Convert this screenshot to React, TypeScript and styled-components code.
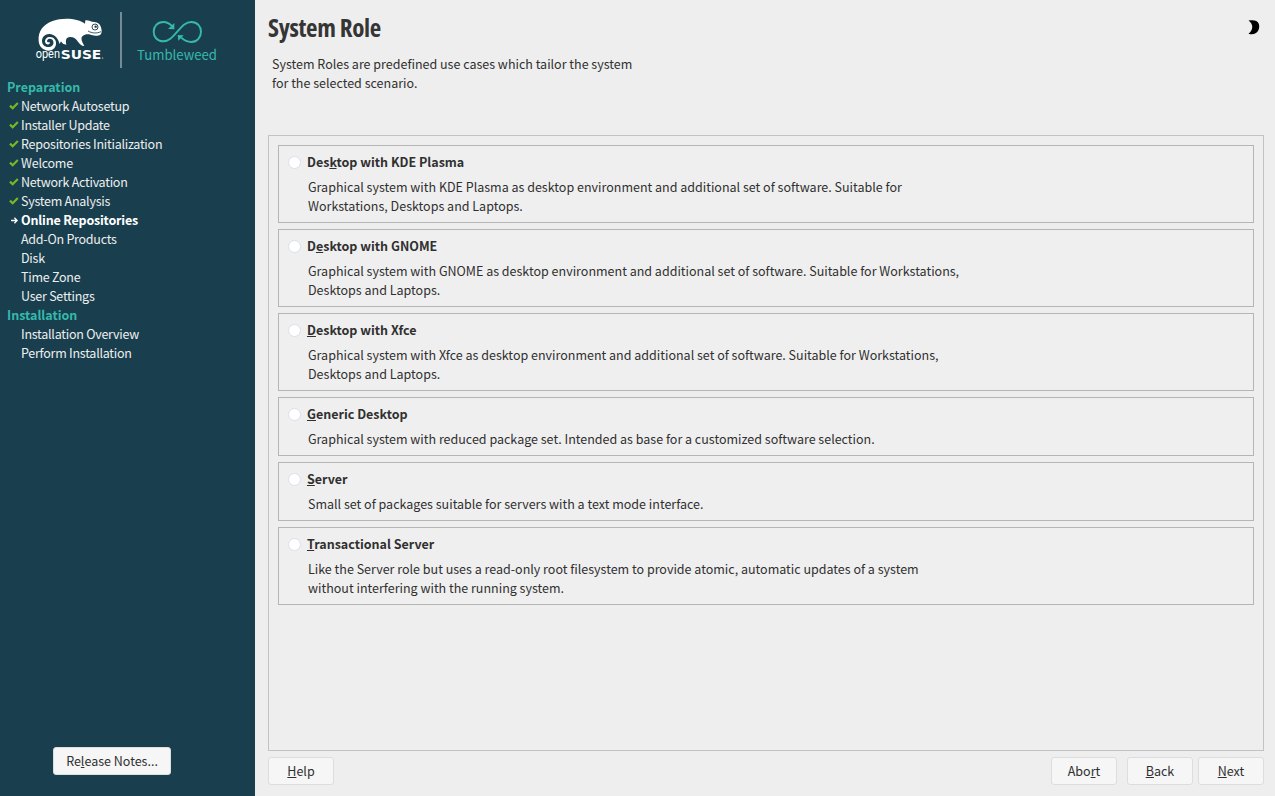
import React from "react";
import styled, { createGlobalStyle } from "styled-components";

const Global = createGlobalStyle`
  * { box-sizing: border-box; }
  body { margin: 0; background: #eeeeee; }
  body, button {
    font-family: "Noto Sans CJK SC", "Source Sans Pro", sans-serif;
    font-size: 12.51px;
    line-height: 19px;
    color: #303030;
  }
`;

const Screen = styled.div`
  display: flex;
  width: 1275px;
  height: 796px;
  overflow: hidden;
`;

const Sidebar = styled.aside`
  display: flex;
  flex-direction: column;
  width: 255px;
  background: #193f4f;
`;

const Logo = styled.svg`
  display: block;
  width: 220px;
  height: 78px;
  margin-left: 20px;
`;

const Steps = styled.ul`
  list-style: none;
  margin: -1px 0 0;
  padding: 0;
  flex: 1;
`;

const Section = styled.li`
  height: 19px;
  padding-left: 7px;
  font-weight: 700;
  color: #35b9ab;
`;

const StepRow = styled.li<{ $current?: boolean }>`
  display: flex;
  align-items: center;
  height: 19px;
  padding-left: 8px;
  color: ${(p) => (p.$current ? "#ffffff" : "#eeeeee")};
  font-weight: ${(p) => (p.$current ? 700 : 400)};
  letter-spacing: ${(p) => (p.$current ? "-0.18px" : "-0.25px")};
`;

const StepIcon = styled.svg`
  width: 13px;
  height: 19px;
  flex: none;
`;

const StepLabel = styled.span`
  white-space: nowrap;
`;

const Main = styled.main`
  flex: 1;
  display: flex;
  flex-direction: column;
  padding: 0 11px 11px 13px;
`;

const Header = styled.header`
  display: flex;
  justify-content: space-between;
  height: 54px;
  padding-top: 9px;
`;

const Title = styled.h1`
  margin: 0;
  font-family: "Open Sans", sans-serif;
  font-stretch: 75%;
  font-weight: 700;
  font-size: 25px;
  line-height: 36px;
  letter-spacing: -0.32px;
  color: #353535;
  white-space: nowrap;
`;

const Moon = styled.svg`
  width: 24px;
  height: 24px;
  margin: 6px 1px 0 0;
`;

const Intro = styled.p`
  margin: 0;
  height: 81px;
  padding-left: 4px;
  white-space: pre-line;
`;

const Panel = styled.section`
  flex: 1;
  display: flex;
  flex-direction: column;
  gap: 6px;
  padding: 9px;
  border: 1px solid #c3c3c3;
`;

const Card = styled.label`
  display: grid;
  grid-template-columns: 19px 1fr;
  row-gap: 6px;
  padding: 6px 9px 7px;
  border: 1px solid #b5b5b5;
  background: #efefef;
`;

const Radio = styled.input`
  appearance: none;
  width: 13px;
  height: 13px;
  margin: 4px 0 0;
  border: 1px solid #dcdfee;
  border-radius: 50%;
  background: #ffffff;
`;

const RoleName = styled.span`
  font-weight: 700;
`;

const Description = styled.span`
  grid-column: 2;
  padding-left: 1px;
  white-space: pre-line;
`;

const Mnemonic = styled.u`
  text-decoration-thickness: 1px;
  text-underline-offset: 1px;
  text-decoration-skip-ink: none;
`;

const Footer = styled.footer`
  display: flex;
  padding-top: 6px;
`;

const Button = styled.button<{ $width?: number }>`
  width: ${(p) => p.$width ?? 66}px;
  height: 28px;
  padding: 0 0 2px;
  border: 1px solid #dddddd;
  border-radius: 3px;
  background: #f6f6f6;
`;

const ReleaseNotes = styled(Button)`
  margin: 0 0 21px 53px;
`;

const Actions = styled.div`
  display: flex;
  margin-left: auto;
  gap: 5px;
`;

const AbortSlot = styled.div`
  padding-right: 5px;
`;

function Hotkey({ text, at }: { text: string; at: number }) {
  return (
    <>
      {text.slice(0, at)}
      <Mnemonic>{text[at]}</Mnemonic>
      {text.slice(at + 1)}
    </>
  );
}

const done = ["Network Autosetup", "Installer Update", "Repositories Initialization", "Welcome", "Network Activation", "System Analysis"];
const pending = ["Add-On Products", "Disk", "Time Zone", "User Settings"];
const install = ["Installation Overview", "Perform Installation"];

const roles = [
  { name: "Desktop with KDE Plasma", at: 3, text: "Graphical system with KDE Plasma as desktop environment and additional set of software. Suitable for\nWorkstations, Desktops and Laptops." },
  { name: "Desktop with GNOME", at: 1, text: "Graphical system with GNOME as desktop environment and additional set of software. Suitable for Workstations,\nDesktops and Laptops." },
  { name: "Desktop with Xfce", at: 0, text: "Graphical system with Xfce as desktop environment and additional set of software. Suitable for Workstations,\nDesktops and Laptops." },
  { name: "Generic Desktop", at: 0, text: "Graphical system with reduced package set. Intended as base for a customized software selection." },
  { name: "Server", at: 0, text: "Small set of packages suitable for servers with a text mode interface." },
  { name: "Transactional Server", at: 0, text: "Like the Server role but uses a read-only root filesystem to provide atomic, automatic updates of a system\nwithout interfering with the running system." },
];

function Step({ label, state }: { label: string; state: "done" | "current" | "pending" }) {
  return (
    <StepRow $current={state === "current"}>
      <StepIcon viewBox="0 0 13 19">
        {state === "done" && <path d="M2 9.6 L4.7 12.3 L9.8 7.1" fill="none" stroke="#73ba25" strokeWidth="2.2" />}
        {state === "current" && <path d="M3 10.5 H9 M6.4 7.8 L9.1 10.5 L6.4 13.2" fill="none" stroke="#fff" strokeWidth="1.3" />}
      </StepIcon>
      <StepLabel>{label}</StepLabel>
    </StepRow>
  );
}

function Brand() {
  return (
    <Logo viewBox="0 0 660 234">
      <path
        fill="#fff"
        d="M56 124 C53 92 72 72 98 63 C120 55 150 55 170 60 C182 63 190 67 195 71 L196 61 C204 60 210 63 216 65 C226 65 236 68 240 75 C245 84 247 96 243 102 C238 110 226 107 212 104 C202 102 194 103 188 108 C182 113 184 122 193 138 C184 137 180 133 174 125 C168 116 162 111 150 111 C138 111 136 122 139 134 C131 134 126 130 123 124 L119 132 C115 118 107 104 90 102 C76 101 66 110 66 124 C67 136 77 143 88 141 C98 139 103 131 99 122 C96 115 86 114 82 120 C79 125 84 129 89 126 C92 132 84 136 78 131 C72 125 76 112 87 111 C100 109 110 120 108 133 C106 146 96 152 86 152 C69 152 57 139 56 124 Z"
      />
      <circle cx="225" cy="81" r="9" fill="#fff" stroke="#193f4f" strokeWidth="2.8" />
      <circle cx="227" cy="80" r="3.6" fill="#193f4f" />
      <path d="M204 93 C216 100 230 101 243 95" fill="none" stroke="#193f4f" strokeWidth="2.6" />
      <text x="47" y="175" fill="#fff" fontFamily="Roboto, sans-serif" fontSize="36" textLength="73" lengthAdjust="spacingAndGlyphs">open</text>
      <text x="122" y="176" fill="#fff" fontFamily="DejaVu Sans, sans-serif" fontWeight="700" fontSize="39" textLength="122" lengthAdjust="spacingAndGlyphs">SUSE</text>
      <circle cx="248" cy="174" r="1.8" fill="#fff" />
      <rect x="301" y="36" width="4" height="168" fill="#a3b2b9" />
      <g fill="none" stroke="#35b9ab" strokeWidth="5.8">
        <path d="M456 78 C448 70 440 66 430 66 C412 66 401 79 401 95 C401 111 412 124 430 124 C446 124 456 113 472 95 C488 77 498 66 514 66 C532 66 543 79 543 95 C543 111 532 126 514 126 C502 126 492 121 484 113" />
      </g>
      <path fill="#35b9ab" d="M463 69 L463 88 L444 87 Z M473 105 L491 106 L475 122 Z" />
      <text x="351" y="179" fill="#35b9ab" fontFamily="Noto Sans CJK SC, sans-serif" fontSize="40" textLength="240" lengthAdjust="spacingAndGlyphs">Tumbleweed</text>
    </Logo>
  );
}

export default function App() {
  return (
    <Screen>
      <Global />
      <Sidebar>
        <Brand />
        <Steps>
          <Section>Preparation</Section>
          {done.map((s) => <Step key={s} label={s} state="done" />)}
          <Step label="Online Repositories" state="current" />
          {pending.map((s) => <Step key={s} label={s} state="pending" />)}
          <Section>Installation</Section>
          {install.map((s) => <Step key={s} label={s} state="pending" />)}
        </Steps>
        <ReleaseNotes $width={118}><Hotkey text="Release Notes..." at={2} /></ReleaseNotes>
      </Sidebar>
      <Main>
        <Header>
          <Title>System Role</Title>
          <Moon viewBox="0 0 24 24"><path d="M9.5 5.6 C19 3.5 21.8 9 19.5 15 C17.5 19.5 13 20 9.5 18.8 C14.5 15 14.5 9 9.5 5.6 Z" /></Moon>
        </Header>
        <Intro>{"System Roles are predefined use cases which tailor the system\nfor the selected scenario."}</Intro>
        <Panel>
          {roles.map((r) => (
            <Card key={r.name}>
              <Radio type="radio" name="role" />
              <RoleName><Hotkey text={r.name} at={r.at} /></RoleName>
              <Description>{r.text}</Description>
            </Card>
          ))}
        </Panel>
        <Footer>
          <Button><Hotkey text="Help" at={0} /></Button>
          <Actions>
            <AbortSlot><Button><Hotkey text="Abort" at={3} /></Button></AbortSlot>
            <Button><Hotkey text="Back" at={0} /></Button>
            <Button><Hotkey text="Next" at={0} /></Button>
          </Actions>
        </Footer>
      </Main>
    </Screen>
  );
}
